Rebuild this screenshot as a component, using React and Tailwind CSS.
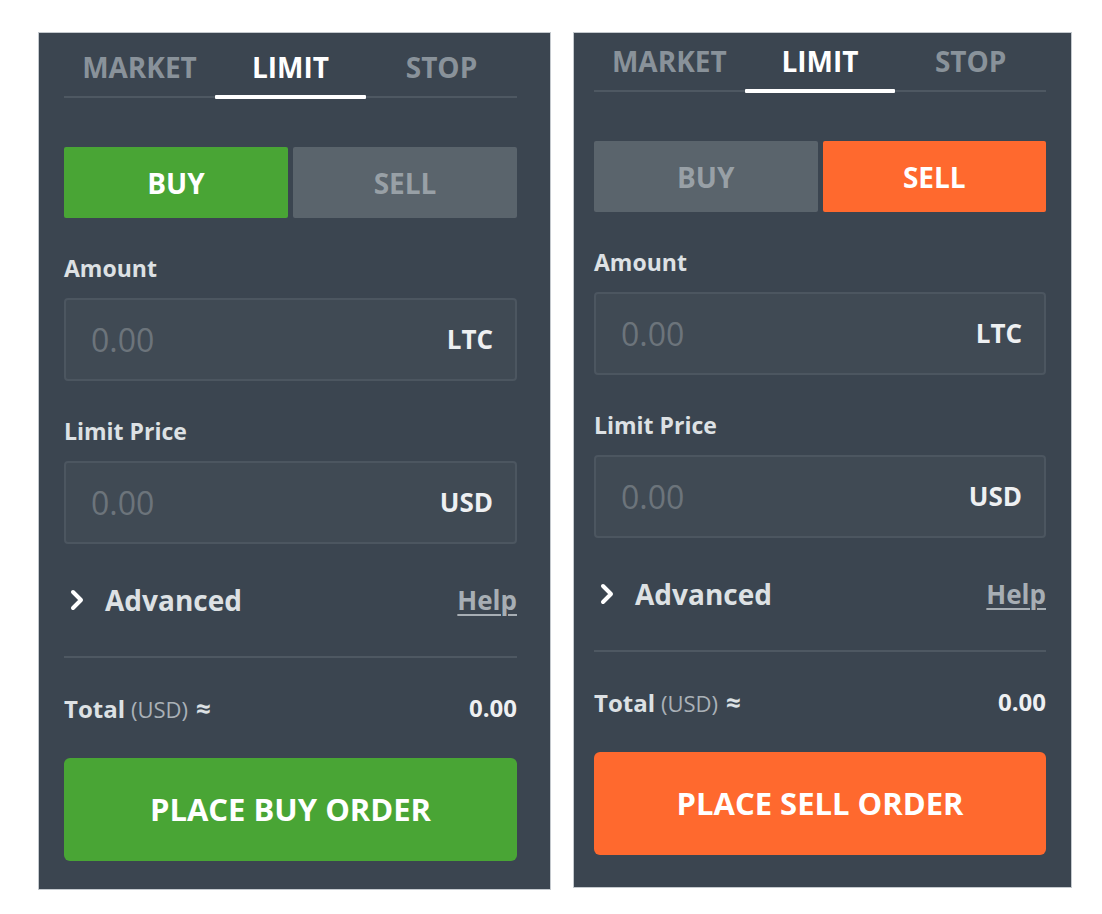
// App.jsx
const TABS = ["MARKET", "LIMIT", "STOP"];

const ChevronRight = () => (
    <svg width="16" height="22" viewBox="0 0 16 22" fill="none">
        <polyline
            points="4,3 12,11 4,19"
            stroke="#ffffff"
            strokeWidth="4"
            strokeLinecap="round"
            strokeLinejoin="round"
        />
    </svg>
);

const Field = ({ label, unit }) => (
    <>
        <div className="mt-[35px] text-[23px] leading-[30px] font-bold text-[#dde1e4]">
            {label}
        </div>
        <div className="mt-[15px] h-[83px] rounded-[4px] border-2 border-[#4c5660] bg-[#404a54] flex items-center justify-between pl-[25px] pr-[22px]">
            <span className="text-[32px] text-[#6c747b]">0.00</span>
            <span className="text-[26px] font-bold text-[#eef0f2]">{unit}</span>
        </div>
    </>
);

const OrderPanel = ({ side, className }) => {
    const isBuy = side === "buy";
    const accent = isBuy ? "bg-[#49a535]" : "bg-[#ff692e]";

    return (
        <div
            className={`bg-[#3b4550] border border-[#c4c9ce] flex flex-col font-['Open_Sans',sans-serif] ${className}`}
        >
            {/* Order type tabs */}
            <div className="grid grid-cols-3">
                {TABS.map((tab) => {
                    const active = tab === "LIMIT";
                    return (
                        <div key={tab} className="flex flex-col">
                            <div
                                className={`h-[50px] pb-[6px] flex items-center justify-center text-[28px] font-bold ${
                                    active ? "text-white" : "text-[#89929a]"
                                }`}
                            >
                                {tab}
                            </div>
                            {active ? (
                                <div className="h-[4px] bg-white rounded-[1px]" />
                            ) : (
                                <div className="h-[4px] flex items-center">
                                    <div className="h-[2px] w-full bg-[#4e5862]" />
                                </div>
                            )}
                        </div>
                    );
                })}
            </div>

            {/* Buy / Sell toggle */}
            <div className="mt-[48px] grid grid-cols-2 gap-[5px] h-[71px]">
                <div
                    className={`flex items-center justify-center text-[28px] font-bold rounded-[2px] ${
                        isBuy ? `${accent} text-white` : "bg-[#5a646c] text-[#98a0a6]"
                    }`}
                >
                    BUY
                </div>
                <div
                    className={`flex items-center justify-center text-[28px] font-bold rounded-[2px] ${
                        !isBuy ? `${accent} text-white` : "bg-[#5a646c] text-[#98a0a6]"
                    }`}
                >
                    SELL
                </div>
            </div>

            <Field label="Amount" unit="LTC" />
            <Field label="Limit Price" unit="USD" />

            {/* Advanced + help */}
            <div className="mt-[36px] h-[40px] flex items-center justify-between">
                <div className="flex items-center">
                    <span className="ml-[5px] mr-[20px] flex">
                        <ChevronRight />
                    </span>
                    <span className="text-[28px] font-bold text-[#dde1e4]">Advanced</span>
                </div>
                <span className="text-[26px] font-bold text-[#a7aeb4] underline underline-offset-4 decoration-2">
                    Help
                </span>
            </div>

            <div className="mt-[36px] h-[2px] bg-[#4e5862]" />

            {/* Total */}
            <div className="mt-[35px] h-[30px] flex items-center justify-between">
                <div className="flex items-baseline">
                    <span className="text-[24px] font-bold text-[#dde1e4]">Total</span>
                    <span className="ml-[6px] text-[22px] text-[#aab1b7]">(USD)</span>
                    <span className="ml-[8px] text-[26px] font-bold text-[#dde1e4]">≈</span>
                </div>
                <span className="text-[24px] font-bold text-[#eef0f2]">0.00</span>
            </div>

            <button
                className={`mt-[35px] h-[103px] rounded-[6px] ${accent} text-white text-[31px] font-bold`}
            >
                {isBuy ? "PLACE BUY ORDER" : "PLACE SELL ORDER"}
            </button>
        </div>
    );
};

export default function App() {
    return (
        <div className="min-h-screen bg-white flex items-start gap-[22px] pl-[38px] pt-[32px]">
            <OrderPanel side="buy" className="w-[513px] h-[858px] pt-[12px] pl-[25px] pr-[33px]" />
            <OrderPanel side="sell" className="w-[499px] h-[856px] pt-[6px] pl-[20px] pr-[25px]" />
        </div>
    );
}
